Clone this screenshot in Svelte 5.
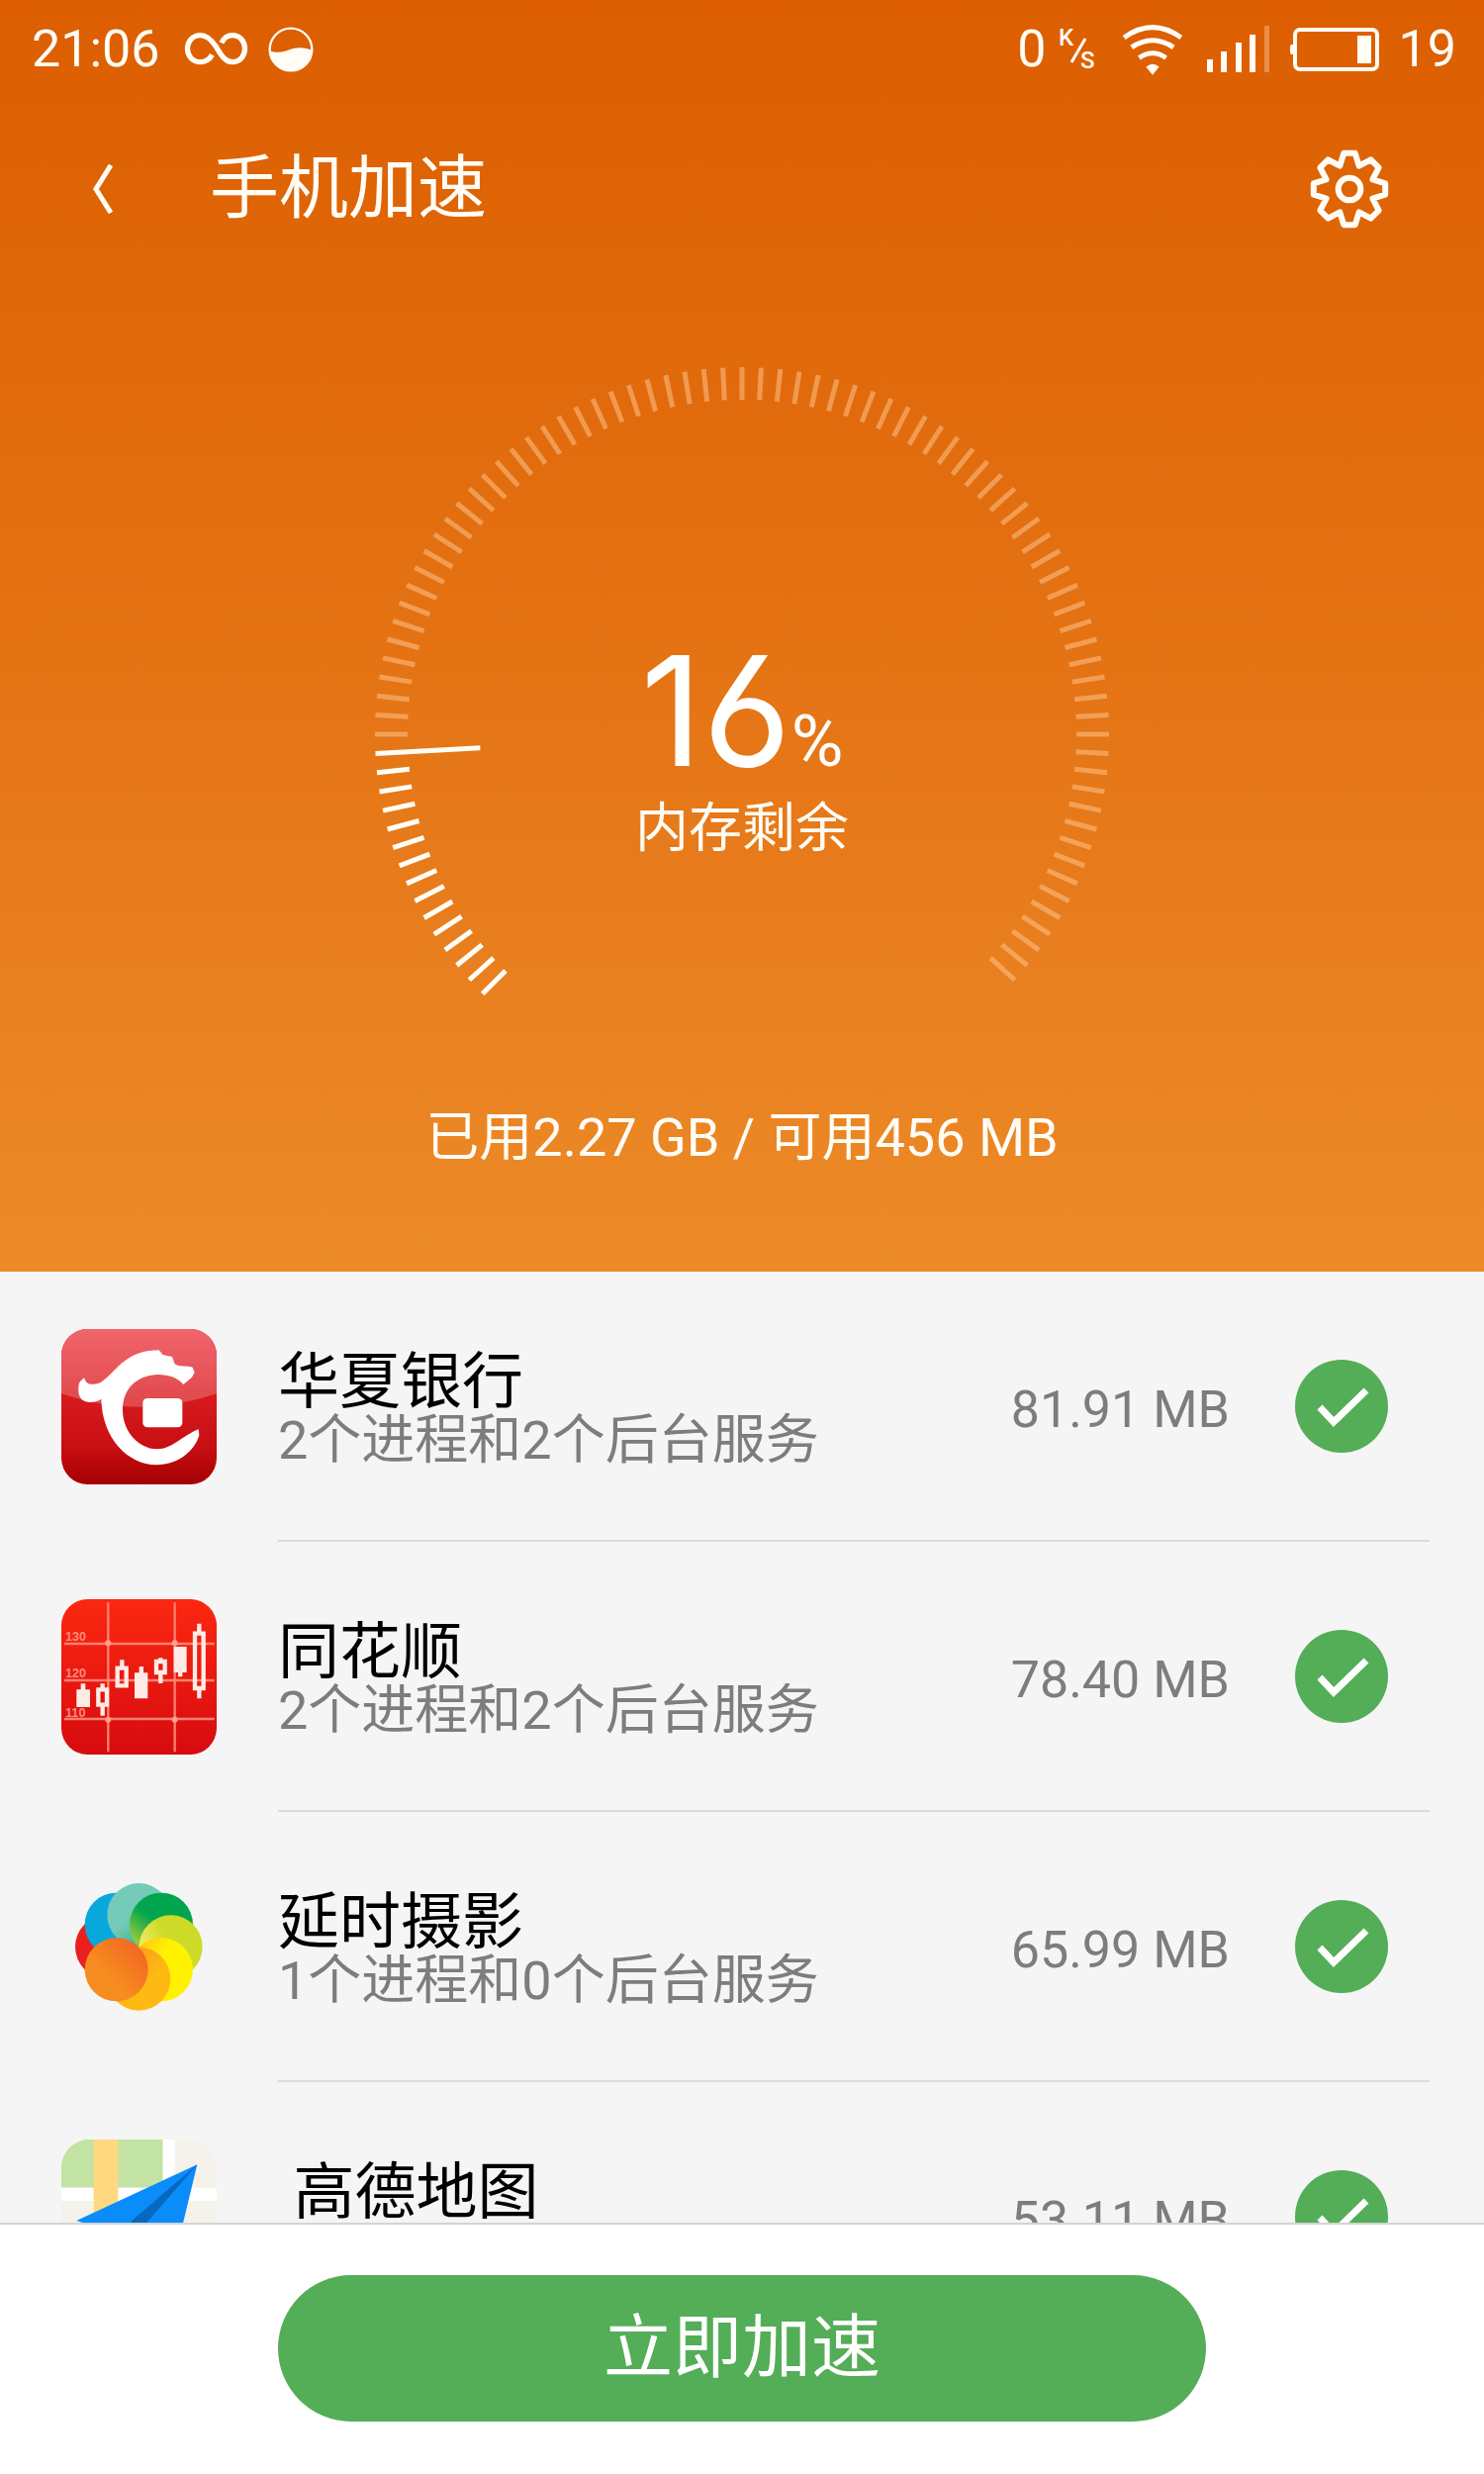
<script>
  const ticks = Array.from({ length: 90 }, (_, i) => {
    const angle = ((135 + i * 3) * Math.PI) / 180;
    const inner = i === 14 ? 265 : 338;
    const outer = 371;
    return {
      x1: 372 + inner * Math.cos(angle),
      y1: 372 + inner * Math.sin(angle),
      x2: 372 + outer * Math.cos(angle),
      y2: 372 + outer * Math.sin(angle),
      active: i <= 14
    };
  });

  const gearPoints = Array.from({ length: 8 }, (_, k) => [
    [k * 45 - 9, 110],
    [k * 45 + 9, 110],
    [k * 45 + 22.5, 76]
  ])
    .flat()
    .map(([deg, r]) => {
      const a = (deg * Math.PI) / 180;
      return `${(r * Math.sin(a)).toFixed(1)},${(-r * Math.cos(a)).toFixed(1)}`;
    })
    .join(' ');

  const petals = [
    [204, 265, '#e8201f'],
    [233, 197, '#08a8dc'],
    [301, 168, 'url(#petal-teal)'],
    [369, 197, 'url(#petal-green)'],
    [398, 265, 'url(#petal-lime)'],
    [369, 334, 'url(#petal-yellow)'],
    [301, 362, 'url(#petal-amber)'],
    [233, 334, 'url(#petal-orange)']
  ];

  let apps = $state([
    { id: 'bank', name: '华夏银行', detail: '2个进程和2个后台服务', size: '81.91 MB', checked: true },
    { id: 'stocks', name: '同花顺', detail: '2个进程和2个后台服务', size: '78.40 MB', checked: true },
    { id: 'timelapse', name: '延时摄影', detail: '1个进程和0个后台服务', size: '65.99 MB', checked: true },
    { id: 'map', name: '\u00a0高德地图', detail: '', size: '53.11 MB', checked: true }
  ]);
</script>

<div class="screen">
  <section class="hero">
    <div class="status">
      <span>21:06</span>
      <svg class="infinity" viewBox="562 84 194 126" aria-hidden="true">
        <path d="M647 163C638 178 625 185 611 185C588 185 572 167 572 145C572 122 588 104 611 104C630 104 643 115 659 139C676 168 688 185 708 185C731 185 746 167 746 145C746 122 731 104 708 104C693 104 682 113 675 127" fill="none" stroke="currentColor" stroke-width="16" />
      </svg>
      <svg class="ball" viewBox="818 76 140 140" aria-hidden="true">
        <circle cx="888" cy="146" r="65" fill="none" stroke="currentColor" stroke-width="7" />
        <path d="M822 150C850 160 870 152 892 144C915 137 935 141 954 148C954 185 925 212 888 212C850 212 822 185 822 150Z" fill="currentColor" />
      </svg>
      <span class="spacer"></span>
      <span class="speed">
        <span>0</span>
        <svg viewBox="0 0 40 56" aria-hidden="true">
          <text class="unit" x="0" y="24">K</text>
          <path d="M13 41L27 17" stroke="currentColor" stroke-width="3" />
          <text class="unit" x="22" y="47">S</text>
        </svg>
      </span>
      <svg class="wifi" viewBox="457 68 186 154" aria-hidden="true">
        <g fill="none" stroke="currentColor" stroke-width="15">
          <path d="M463 107Q550 45 637 107" />
          <path d="M486 137Q550 94 614 137" />
          <path d="M509 169Q550 141 591 169" />
        </g>
        <path d="M530 196Q550 180 570 196L550 221Z" fill="currentColor" />
      </svg>
      <svg class="signal" viewBox="0 0 64 48" fill="currentColor" aria-hidden="true">
        <rect x="0" y="34" width="6" height="13" />
        <rect x="14" y="26" width="6" height="21" />
        <rect x="29" y="17" width="6" height="30" />
        <rect x="43" y="9" width="6" height="38" />
        <rect x="58" y="0" width="5" height="47" opacity=".3" />
      </svg>
      <svg class="battery" viewBox="0 0 90 44" aria-hidden="true">
        <rect x="5" y="2" width="83" height="40" rx="5" fill="none" stroke="currentColor" stroke-width="4" />
        <rect x="0" y="17" width="5" height="10" rx="2" fill="currentColor" />
        <rect x="68" y="8" width="14" height="28" fill="currentColor" />
      </svg>
      <span>19</span>
    </div>

    <header>
      <button class="icon-button" aria-label="返回">
        <svg class="chevron" viewBox="0 0 20 50"><path d="M18 1L3 25L18 49" fill="none" stroke="currentColor" stroke-width="5" /></svg>
      </button>
      <h1>手机加速</h1>
      <button class="icon-button" aria-label="设置">
        <svg class="gear" viewBox="-120 -120 240 240" fill="none" stroke="currentColor" stroke-linejoin="round">
          <polygon points={gearPoints} stroke-width="18" />
          <circle r="34" stroke-width="18" />
        </svg>
      </button>
    </header>

    <div class="gauge">
      <svg viewBox="0 0 744 640" aria-hidden="true">
        {#each ticks as t}
          <line class:active={t.active} x1={t.x1} y1={t.y1} x2={t.x2} y2={t.y2} />
        {/each}
      </svg>
      <div class="reading">
        <p class="percent">16<span>%</span></p>
        <p class="caption">内存剩余</p>
      </div>
    </div>

    <p class="usage">已用2.27 GB / 可用456 MB</p>
  </section>

  <ul class="apps">
    {#each apps as app (app.id)}
      <li>
        {#if app.id === 'bank'}
          <svg class="app-icon" viewBox="66 70 471 471" aria-hidden="true">
            <defs>
              <linearGradient id="bank-bg" x2="0" y2="1"><stop offset=".4" stop-color="#d81c20" /><stop offset=".75" stop-color="#c90f13" /><stop offset="1" stop-color="#a50003" /></linearGradient>
              <linearGradient id="bank-gloss" x2="0" y2="1"><stop stop-color="#f0656b" /><stop offset="1" stop-color="#e0474b" /></linearGradient>
              <clipPath id="bank-clip"><rect x="66" y="70" width="471" height="471" rx="80" /></clipPath>
            </defs>
            <g clip-path="url(#bank-clip)">
              <rect x="66" y="70" width="471" height="471" fill="url(#bank-bg)" />
              <path d="M66 70H537V266Q302 346 66 266Z" fill="url(#bank-gloss)" />
            </g>
            <path fill="#fff" d="M118 250C118 232 124 226 136 218C140 240 160 240 180 234C225 212 245 150 330 136L362 134L374 148L402 154L410 176C425 186 445 180 464 186L470 202L462 216L436 238C420 218 390 207 355 208C295 212 252 250 252 315C252 380 300 432 355 434C400 436 430 395 482 374L484 392C470 440 420 482 355 482C265 480 190 400 187 282C170 294 140 295 128 284C120 275 117 265 118 250Z" />
            <rect x="313" y="280" width="120" height="88" rx="14" fill="#fff" />
          </svg>
        {:else if app.id === 'stocks'}
          <svg class="app-icon" viewBox="66 80 471 471" aria-hidden="true">
            <defs>
              <linearGradient id="stock-bg" x2="0" y2="1"><stop stop-color="#fb2810" /><stop offset="1" stop-color="#d70b10" /></linearGradient>
            </defs>
            <rect x="66" y="80" width="471" height="471" rx="80" fill="url(#stock-bg)" />
            <g stroke="#ff8070" stroke-width="7">
              <path d="M75 215H530M75 326H530M75 443H530M208 90V543M410 90V543" />
            </g>
            <g fill="#ffa090">
              <circle cx="208" cy="213" r="9" /><circle cx="410" cy="213" r="9" />
              <circle cx="208" cy="445" r="9" /><circle cx="410" cy="445" r="9" />
            </g>
            <g class="scale" fill="#ff8c7c">
              <text x="78" y="206">130</text>
              <text x="78" y="318">120</text>
              <text x="78" y="437">110</text>
            </g>
            <g fill="#ffebe6">
              <path d="M125 336H139V354H153V407H112V354H125Z" />
              <path d="M302 284H315V303H328V381H288V303H302Z" />
              <path d="M407 224H446V302H433V315H420V302H407Z" />
            </g>
            <g fill="none" stroke="#ffebe6" stroke-width="13">
              <path d="M178 354H204V400H178ZM191 336V354M191 400V433" />
              <path d="M236 289H263V342H236ZM250 264V289" />
              <path d="M354 269H380V302H354ZM367 258V269M367 302V335" />
              <path d="M471 184H497V350H471ZM484 154V184M484 350V381" />
            </g>
          </svg>
        {:else if app.id === 'timelapse'}
          <svg class="app-icon" viewBox="66 30 471 471" aria-hidden="true">
            <defs>
              <linearGradient id="petal-teal" x1=".4" y1=".5" x2=".8" y2="1"><stop stop-color="#74cbb8" /><stop offset="1" stop-color="#2cab70" /></linearGradient>
              <linearGradient id="petal-green" x1=".4" y1=".45" x2=".1" y2=".8"><stop stop-color="#00a54d" /><stop offset="1" stop-color="#9ccb3c" /></linearGradient>
              <linearGradient id="petal-lime" x1=".4" y1=".3" x2="0" y2=".5"><stop stop-color="#cddb28" /><stop offset="1" stop-color="#f3ee62" /></linearGradient>
              <linearGradient id="petal-yellow" x1=".45" y1=".35" x2=".1" y2=".1"><stop stop-color="#fff200" /><stop offset="1" stop-color="#ffc216" /></linearGradient>
              <linearGradient id="petal-amber" x1=".7" y1=".5" x2=".3" y2=".1"><stop stop-color="#feb913" /><stop offset="1" stop-color="#f99b1c" /></linearGradient>
              <linearGradient id="petal-orange" x1=".9" y1=".1" x2=".4" y2=".6"><stop stop-color="#f26522" /><stop offset="1" stop-color="#f68b1f" /></linearGradient>
            </defs>
            {#each petals as [cx, cy, fill]}
              <circle {cx} {cy} r="96" {fill} />
            {/each}
          </svg>
        {:else}
          <svg class="app-icon" viewBox="66 852 471 471" aria-hidden="true">
            <defs><clipPath id="map-clip"><rect x="66" y="852" width="471" height="471" rx="84" /></clipPath></defs>
            <g clip-path="url(#map-clip)">
              <rect x="66" y="852" width="471" height="471" fill="#f5f2eb" />
              <rect x="66" y="852" width="308" height="146" fill="#c2e3a4" />
              <path d="M374 852H410V998H537V1038H66V998H374Z" fill="#fff" />
              <rect x="164" y="852" width="74" height="471" fill="#ffd880" />
            </g>
            <path d="M478 928L112 1098L270 1150L400 1250Z" fill="#0a8cfa" />
            <path d="M478 928L280 1098L270 1150L330 1098Z" fill="#0669bd" />
          </svg>
        {/if}
        <div class="row">
          <div class="info">
            <p class="name">{app.name}</p>
            <p class="detail">{app.detail}</p>
          </div>
          <span class="size">{app.size}</span>
          <label class="check">
            <input type="checkbox" bind:checked={app.checked} aria-label={app.name.trim()} />
            <svg viewBox="0 0 94 94" aria-hidden="true"><path d="M25 48L39 63L72 31" fill="none" stroke="#fff" stroke-width="7" /></svg>
          </label>
        </div>
      </li>
    {/each}
  </ul>

  <footer>
    <button class="boost">立即加速</button>
  </footer>
</div>

<style>
  :global(body) {
    margin: 0;
  }
  .screen {
    display: flex;
    flex-direction: column;
    height: 100vh;
    background: #f5f5f5;
    color: #000;
    font-family: Roboto, "Noto Sans CJK SC", sans-serif;
  }
  p,
  h1,
  ul {
    margin: 0;
    padding: 0;
    font-weight: 400;
  }
  svg {
    display: block;
    flex: none;
  }
  button {
    border: 0;
    padding: 0;
    background: none;
    color: inherit;
    font: inherit;
    cursor: pointer;
  }
  .hero {
    flex: none;
    display: flex;
    flex-direction: column;
    padding-bottom: 95px;
    background: linear-gradient(#dc5e00, #e47213 50%, #ed8b29);
    color: #fffdf5;
  }
  .status {
    display: flex;
    align-items: center;
    gap: 24px;
    height: 100px;
    padding: 0 28px 0 32px;
    font-size: 52px;
    line-height: 60px;
  }
  .spacer {
    flex: 1;
  }
  .infinity {
    width: 65px;
    height: 42px;
  }
  .ball {
    width: 46px;
    height: 46px;
    margin-left: -4px;
  }
  .speed {
    display: flex;
    align-items: center;
    gap: 12px;
  }
  .speed svg {
    width: 40px;
    height: 56px;
  }
  .unit {
    font-size: 24px;
    font-weight: 500;
    fill: currentColor;
  }
  .wifi {
    width: 62px;
    height: 51px;
  }
  .signal {
    width: 64px;
    height: 48px;
    margin-right: -4px;
  }
  .battery {
    width: 90px;
    height: 44px;
    margin-right: -4px;
  }
  header {
    display: flex;
    align-items: center;
    height: 182px;
    padding: 0 96px 0 92px;
  }
  .chevron {
    width: 24px;
    height: 50px;
  }
  .gear {
    width: 80px;
    height: 80px;
  }
  h1 {
    flex: 1;
    margin-left: 96px;
    font-size: 70px;
    line-height: 84px;
  }
  .gauge {
    display: grid;
    justify-items: center;
    margin-top: 88px;
  }
  .gauge > * {
    grid-area: 1 / 1;
  }
  .gauge svg {
    width: 744px;
    height: 640px;
  }
  line {
    stroke: #ffca96;
    stroke-opacity: 0.5;
    stroke-width: 5;
  }
  line.active {
    stroke: #fffdf5;
    stroke-opacity: 1;
  }
  .reading {
    align-self: center;
    padding-top: 120px;
    text-align: center;
  }
  .percent {
    color: #fff;
    font-family: Inter, sans-serif;
    font-size: 154px;
    font-feature-settings: "cv03";
    line-height: 176px;
  }
  .percent span {
    font-family: Roboto, sans-serif;
    font-size: 72px;
    line-height: 72px;
  }
  .caption {
    font-size: 54px;
    line-height: 64px;
  }
  .usage {
    margin-top: 100px;
    font-size: 54px;
    line-height: 80px;
    text-align: center;
  }
  .apps {
    flex: 1;
    min-height: 0;
    overflow-y: auto;
    scrollbar-width: none;
    list-style: none;
  }
  li {
    display: flex;
    align-items: center;
    gap: 62px;
    padding: 0 55px 0 62px;
  }
  .app-icon {
    width: 157px;
    height: 157px;
  }
  .scale {
    font-family: "Liberation Sans", sans-serif;
    font-size: 38px;
    font-weight: 700;
  }
  .row {
    flex: 1;
    display: flex;
    align-items: center;
    box-sizing: border-box;
    height: 273px;
    padding-right: 42px;
    border-bottom: 2px solid #dadada;
  }
  .info {
    flex: 1;
    padding-top: 8px;
  }
  .name {
    font-size: 62px;
    line-height: 62px;
  }
  .detail {
    min-height: 56px;
    color: #7d7d7d;
    font-size: 54px;
    line-height: 56px;
  }
  .size {
    margin-right: 66px;
    padding-top: 8px;
    color: #7d7d7d;
    font-size: 52px;
    line-height: 60px;
    white-space: nowrap;
  }
  .check {
    display: grid;
    width: 94px;
    height: 94px;
    cursor: pointer;
  }
  .check > * {
    grid-area: 1 / 1;
    width: 94px;
    height: 94px;
  }
  .check svg {
    pointer-events: none;
  }
  input {
    appearance: none;
    margin: 0;
    border-radius: 50%;
    background: #c4c4c4;
  }
  input:checked {
    background: #54ad57;
  }
  footer {
    flex: none;
    display: flex;
    justify-content: center;
    padding: 51px 281px 53px;
    border-top: 2px solid #d4d4d4;
    background: #fff;
  }
  .boost {
    flex: 1;
    height: 148px;
    border-radius: 74px;
    background: #54ad57;
    color: #fff;
    font-size: 70px;
    line-height: 84px;
  }
</style>
